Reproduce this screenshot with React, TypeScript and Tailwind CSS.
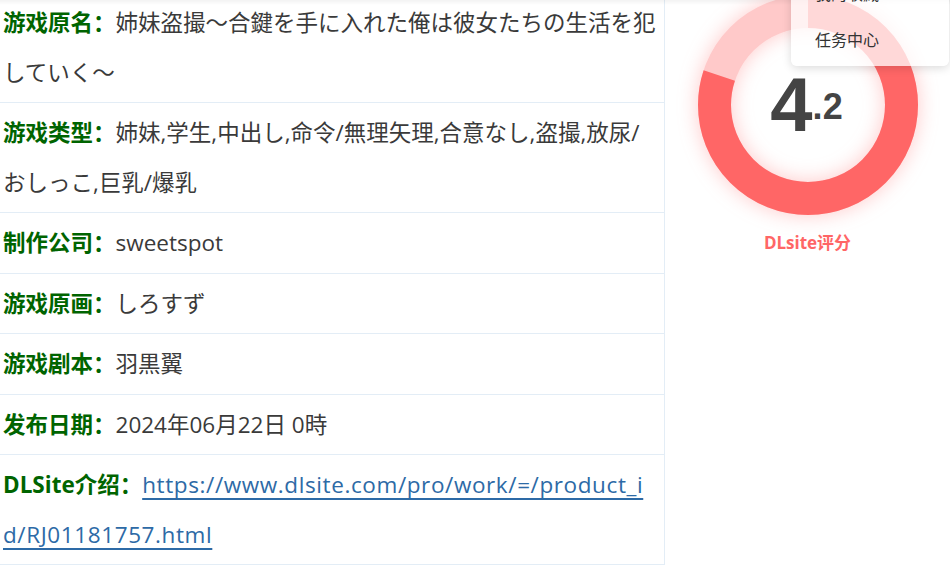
import React from "react";

type InfoRow = {
  label: string;
  value: string;
  href?: string;
};

const rows: InfoRow[] = [
  { label: "游戏原名：", value: "姉妹盗撮～合鍵を手に入れた俺は彼女たちの生活を犯していく～" },
  { label: "游戏类型：", value: "姉妹,学生,中出し,命令/無理矢理,合意なし,盗撮,放尿/おしっこ,巨乳/爆乳" },
  { label: "制作公司：", value: "sweetspot" },
  { label: "游戏原画：", value: "しろすず" },
  { label: "游戏剧本：", value: "羽黒翼" },
  { label: "发布日期：", value: "2024年06月22日 0時" },
  {
    label: "DLSite介绍：",
    value: "https://www.dlsite.com/pro/work/=/product_id/RJ01181757.html",
    href: "https://www.dlsite.com/pro/work/=/product_id/RJ01181757.html",
  },
];

const FONT = { fontFamily: '"Open Sans", "Noto Sans CJK SC", "Noto Sans CJK JP", sans-serif' };

function ScoreRing({ score }: { score: number }) {
  const r = 93.5;
  const c = 2 * Math.PI * r;
  // filled share as drawn on the page (red part)
  const filled = 0.8;

  return (
    <div className="relative w-[220px] h-[220px]">
      <svg
        width="220"
        height="220"
        viewBox="0 0 220 220"
        className="drop-shadow-[0_0_10px_rgba(255,102,102,0.35)]"
      >
        <circle cx="110" cy="110" r={r} fill="none" stroke="#ffc9c9" strokeWidth="33" />
        <circle
          cx="110"
          cy="110"
          r={r}
          fill="none"
          stroke="#ff6666"
          strokeWidth="33"
          strokeDasharray={`${c * filled} ${c}`}
          transform="rotate(-90 110 110)"
        />
      </svg>
      <div
        className="absolute inset-0 flex items-center justify-center text-[#444] font-bold pr-[2px]"
        style={{ fontFamily: '"Liberation Sans", Arial, sans-serif' }}
      >
        <span className="text-[76px] leading-none">{Math.floor(score)}</span>
        <span className="text-[36px] leading-none mt-[4px]">.{Math.round((score % 1) * 10)}</span>
      </div>
    </div>
  );
}

export default function App() {
  return (
    <div className="relative w-[950px] h-[568px] overflow-hidden bg-white" style={FONT}>
      <div className="flex">
        {/* info table */}
        <div className="w-[665px] border-r border-[#e3edf6] -mt-[7px]">
          {rows.map((row) => (
            <div
              key={row.label}
              className="border-b border-[#e3edf6] py-[5px] pl-[3px] pr-[8px] text-[22.5px] leading-[49.5px] text-[#3a3a3a] break-all"
            >
              <span className="font-bold text-[#006400]">{row.label}</span>
              {row.href ? (
                <a
                  href={row.href}
                  className="text-[#2d6aa6] underline underline-offset-[5px] tracking-[0.6px]"
                >
                  {row.value}
                </a>
              ) : (
                <span>{row.value}</span>
              )}
            </div>
          ))}
        </div>

        {/* score */}
        <div className="flex-1 flex flex-col items-center -mt-[5px]">
          <ScoreRing score={4.2} />
          <div className="mt-[15px] text-[17px] font-bold text-[#ff6666]">DLsite评分</div>
        </div>
      </div>

      {/* header shadow */}
      <div className="absolute top-0 left-0 right-0 h-[5px] bg-gradient-to-b from-black/5 to-transparent" />

      {/* user dropdown */}
      <div className="absolute left-[791px] top-[-29px] w-[158px] bg-white/75 rounded-b-[6px] shadow-[0_2px_10px_rgba(0,0,0,0.15)] pb-[3px]">
        <div className="h-[46px] leading-[46px] pl-[24px] text-[16px] text-[#333]">我的收藏</div>
        <div className="h-[46px] leading-[46px] pl-[24px] text-[16px] text-[#333]">任务中心</div>
      </div>
    </div>
  );
}
